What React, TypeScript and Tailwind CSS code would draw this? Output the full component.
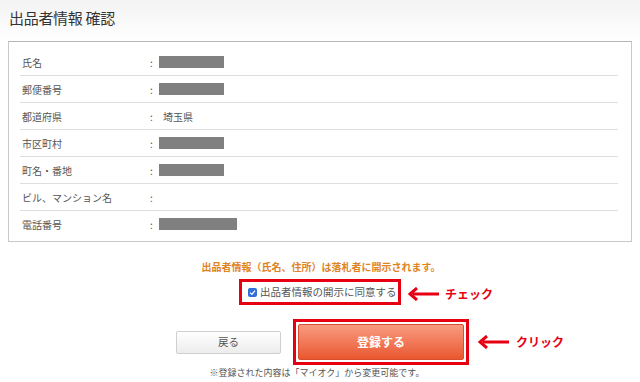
import React from "react";

const font = { fontFamily: '"Noto Sans CJK JP", "Noto Sans", sans-serif' };

function Arrow() {
  return (
    <svg width="32" height="14" viewBox="0 0 32 14" className="shrink-0">
      <path d="M31 7 H5" stroke="#e60012" strokeWidth="3" fill="none" />
      <path d="M9 1 L2 7 L9 13" stroke="#e60012" strokeWidth="3" fill="none" strokeLinejoin="miter" />
    </svg>
  );
}

const rows: { label: string; value?: string; box?: number }[] = [
  { label: "氏名", box: 65 },
  { label: "郵便番号", box: 65 },
  { label: "都道府県", value: "埼玉県" },
  { label: "市区町村", box: 65 },
  { label: "町名・番地", box: 65 },
  { label: "ビル、マンション名" },
  { label: "電話番号", box: 78 },
];

export default function App() {
  return (
    <div className="w-[640px] h-[382px] bg-white overflow-hidden text-[#444]" style={font}>
      <div className="h-[41px] bg-gradient-to-b from-[#f3f3f3] to-white pl-[9px] pt-[7px]">
        <h1 className="text-[15px] leading-[22px] text-[#333] tracking-[-0.3px]">出品者情報 確認</h1>
      </div>
      <div className="mx-2 border border-[#c9c9c9] border-t-[#b5b5b5] pt-[7px] pb-[3px] pl-[11px] pr-[13px]">
        {rows.map((r, i) => (
          <div
            key={r.label}
            className={`flex items-center h-[27px] ${i < rows.length - 1 ? "border-b border-[#dedede]" : ""}`}
          >
            <div className="w-[130px] pl-[2px] text-[10px] text-[#555]">{r.label}</div>
            <div className="w-[9px] text-[10px] text-[#555]">:</div>
            {r.box ? <div className="h-[12px] bg-[#808080] -mt-[1px]" style={{ width: r.box }} /> : null}
            {r.value ? <div className="pl-[4px] text-[10px] text-[#555]">{r.value}</div> : null}
          </div>
        ))}
      </div>
      <div className="mt-[18px] text-center text-[10px] leading-[14px] font-bold text-[#e0841f] pl-[2px]">
        出品者情報（氏名、住所）は落札者に開示されます。
      </div>
      <div className="mt-[5px] flex justify-center">
        <div className="relative flex items-center h-[26px] w-[162px] border-[3px] border-[#e60012] pl-[6px]">
          <span className="flex items-center justify-center w-[9px] h-[9px] rounded-[2px] bg-[#2f6fd6]">
            <svg width="7" height="7" viewBox="0 0 7 7">
              <path d="M1 3.6 L2.9 5.4 L6 1.6" stroke="white" strokeWidth="1.3" fill="none" />
            </svg>
          </span>
          <span className="ml-[3px] text-[10.5px] text-[#555] whitespace-nowrap">出品者情報の開示に同意する</span>
          <div className="absolute left-[166px] top-[3px] flex items-center gap-[5px]">
            <Arrow />
            <span className="text-[12px] font-bold text-[#e60012] whitespace-nowrap">チェック</span>
          </div>
        </div>
      </div>
      <div className="mt-[14px] flex items-center pl-[176px]">
        <button className="w-[105px] h-[23px] rounded-[2px] border border-[#cfcfcf] bg-gradient-to-b from-white to-[#ececec] text-[10.5px] text-[#555]">
          戻る
        </button>
        <div className="ml-[12px] w-[176px] h-[46px] border-[3px] border-[#e60012] p-[2px] pb-[2px]">
          <button className="w-full h-full rounded-[2px] border border-[#d9512c] bg-gradient-to-b from-[#f89a80] to-[#e9552c] text-white text-[12px] font-bold">
            登録する
          </button>
        </div>
        <div className="ml-[9px] flex items-center gap-[6px]">
          <Arrow />
          <span className="text-[12px] font-bold text-[#e60012] whitespace-nowrap">クリック</span>
        </div>
      </div>
      <div className="mt-[2px] text-center text-[9px] leading-[12px] text-[#555] pr-[6px]">
        ※登録された内容は「マイオク」から変更可能です。
      </div>
    </div>
  );
}
